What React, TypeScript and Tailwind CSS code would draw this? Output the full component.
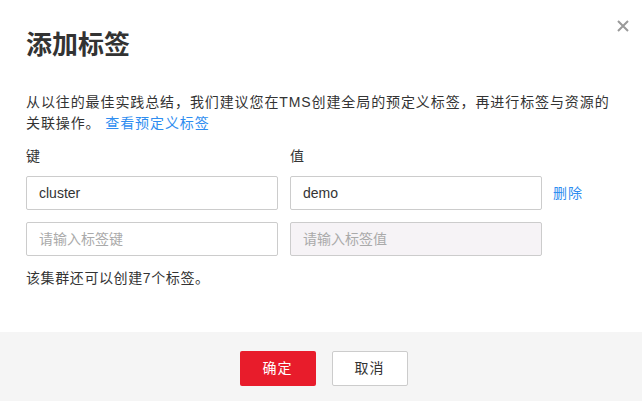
import { useState } from "react";

const font = '"Liberation Sans", "Noto Sans CJK SC", sans-serif';

function TagInput({
	value,
	placeholder,
	disabled,
	onChange,
}: {
	value: string;
	placeholder: string;
	disabled?: boolean;
	onChange?: (v: string) => void;
}) {
	return (
		<input
			value={value}
			placeholder={placeholder}
			disabled={disabled}
			onChange={(e) => onChange?.(e.target.value)}
			className={
				disabled
					? "w-[252px] h-[34px] px-[12px] rounded-[2px] border border-[#cccccc] bg-[#f6f3f6] text-[14px] text-[#333333] placeholder:text-[#aaaaaa] outline-none"
					: "w-[252px] h-[34px] px-[12px] rounded-[2px] border border-[#cccccc] bg-white text-[14px] text-[#333333] placeholder:text-[#aaaaaa] outline-none"
			}
			style={{ fontFamily: font }}
		/>
	);
}

export default function App() {
	const [key, setKey] = useState("cluster");
	const [val, setVal] = useState("demo");
	const [newKey, setNewKey] = useState("");

	return (
		<div
			className="w-[642px] h-[401px] bg-white flex flex-col relative text-[#333333]"
			style={{ fontFamily: font }}
		>
			<button className="absolute top-[19px] right-[13px] w-[13px] h-[13px] flex items-center justify-center">
				<svg width="12" height="12" viewBox="0 0 12 12">
					<path
						d="M1 1L11 11M11 1L1 11"
						stroke="#9a9a9a"
						strokeWidth="2"
					/>
				</svg>
			</button>

			<div className="px-[26px] pt-[32px]">
				<h2 className="text-[26px] leading-[26px] font-bold text-[#333333]">
					添加标签
				</h2>

				<p className="mt-[34px] text-[14px] leading-[21px] tracking-[0.9px]">
					从以往的最佳实践总结，我们建议您在TMS创建全局的预定义标签，再进行标签与资源的
					<br />
					关联操作。{" "}
					<a href="#" className="text-[#2e8df0]">
						查看预定义标签
					</a>
				</p>

				<div className="mt-[12px] flex gap-[12px] text-[14px] leading-[21px]">
					<span className="w-[252px]">键</span>
					<span className="w-[252px]">值</span>
				</div>

				<div className="mt-[9px] flex items-center gap-[12px]">
					<TagInput value={key} placeholder="请输入标签键" onChange={setKey} />
					<TagInput value={val} placeholder="请输入标签值" onChange={setVal} />
					<a href="#" className="ml-[-1px] text-[14px] text-[#2e8df0] tracking-[0.9px]">
						删除
					</a>
				</div>

				<div className="mt-[12px] flex items-center gap-[12px]">
					<TagInput
						value={newKey}
						placeholder="请输入标签键"
						onChange={setNewKey}
					/>
					<TagInput value="" placeholder="请输入标签值" disabled />
				</div>

				<p className="mt-[12px] text-[14px] leading-[21px] tracking-[0.6px]">
					该集群还可以创建7个标签。
				</p>
			</div>

			<div className="flex-1" />

			<div className="h-[69px] bg-[#f5f5f5] flex justify-center gap-[16px] pt-[19px] pl-[5px]">
				<button className="w-[76px] h-[35px] rounded-[2px] bg-[#e81c2b] text-white text-[14px] tracking-[1px]">
					确定
				</button>
				<button className="w-[76px] h-[35px] rounded-[2px] bg-white border border-[#cccccc] text-[#333333] text-[14px] tracking-[1px]">
					取消
				</button>
			</div>
		</div>
	);
}
